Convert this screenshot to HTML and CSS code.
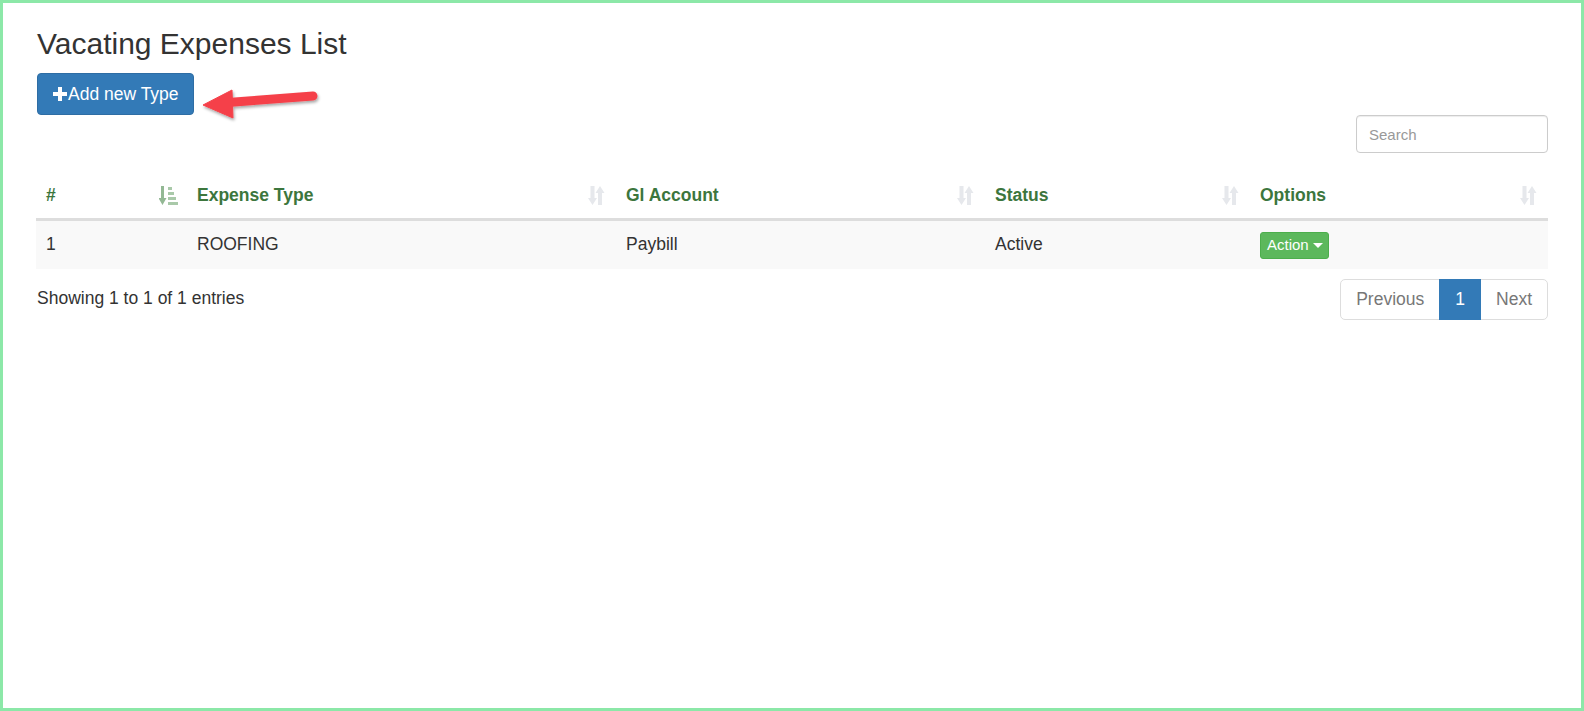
FILE: index.html
```html
<!DOCTYPE html>
<html>
<head>
<meta charset="utf-8">
<link rel="stylesheet" href="styles.css">
</head>
<body>
<div class="frame">
  <h3 class="title">Vacating Expenses List</h3>
  <button class="btn-add"><svg class="plus" viewBox="0 0 14 14" width="14" height="14"><path d="M5 0h4v5h5v4H9v5H5V9H0V5h5z" fill="#fff"/></svg>Add new Type</button>
  <div class="toolbar">
    <input class="search" type="text" placeholder="Search">
  </div>
  <table class="grid">
    <colgroup>
      <col style="width:151px"><col style="width:429px"><col style="width:369px"><col style="width:265px"><col style="width:298px">
    </colgroup>
    <thead>
      <tr>
        <th><div class="th-in"><span>#</span>
          <svg class="sort" viewBox="0 0 19 19" width="19" height="19"><path d="M2 0h3v12h2.5L3.5 19 -0.5 12H2z" fill="#93b894"/><rect x="9" y="1" width="4" height="3" fill="#a9c9a9"/><rect x="9" y="6" width="6" height="3" fill="#a9c9a9"/><rect x="9" y="11" width="8" height="3" fill="#a9c9a9"/><rect x="9" y="16" width="10" height="3" fill="#a9c9a9"/></svg></div></th>
        <th><div class="th-in"><span>Expense Type</span>
          <svg class="sort" viewBox="0 0 19 19" width="19" height="19"><path d="M2.5 0h4v12h2.5L4.5 19 0 12h2.5z M14 19h-4V7H7.5L12 0l4.5 7H14z" fill="#e6e8ec"/></svg></div></th>
        <th><div class="th-in"><span>Gl Account</span>
          <svg class="sort" viewBox="0 0 19 19" width="19" height="19"><path d="M2.5 0h4v12h2.5L4.5 19 0 12h2.5z M14 19h-4V7H7.5L12 0l4.5 7H14z" fill="#e6e8ec"/></svg></div></th>
        <th><div class="th-in"><span>Status</span>
          <svg class="sort" viewBox="0 0 19 19" width="19" height="19"><path d="M2.5 0h4v12h2.5L4.5 19 0 12h2.5z M14 19h-4V7H7.5L12 0l4.5 7H14z" fill="#e6e8ec"/></svg></div></th>
        <th><div class="th-in"><span>Options</span>
          <svg class="sort" viewBox="0 0 19 19" width="19" height="19"><path d="M2.5 0h4v12h2.5L4.5 19 0 12h2.5z M14 19h-4V7H7.5L12 0l4.5 7H14z" fill="#e6e8ec"/></svg></div></th>
      </tr>
    </thead>
    <tbody>
      <tr class="odd">
        <td>1</td>
        <td>ROOFING</td>
        <td>Paybill</td>
        <td>Active</td>
        <td><button class="btn-action">Action <span class="caret"></span></button></td>
      </tr>
    </tbody>
  </table>
  <div class="footer">
    <div class="info">Showing 1 to 1 of 1 entries</div>
    <div class="pager">
      <span class="pg disabled first">Previous</span>
      <span class="pg active">1</span>
      <span class="pg disabled last">Next</span>
    </div>
  </div>
  <svg class="arrow" width="140" height="50" viewBox="0 0 140 50">
    <defs>
      <filter id="sh" x="-20%" y="-30%" width="140%" height="180%">
        <feDropShadow dx="1" dy="2" stdDeviation="1.5" flood-color="#000" flood-opacity="0.35"/>
      </filter>
    </defs>
    <g filter="url(#sh)" fill="#f5414a" stroke="#f5414a">
      <line x1="28" y1="19.5" x2="113" y2="13" stroke-width="9" stroke-linecap="round"/>
      <polygon points="3,22 32,7 33,35" stroke-width="1" stroke-linejoin="round"/>
    </g>
  </svg>
</div>
</body>
</html>
```
FILE: styles.css
```css
* { box-sizing: border-box; }
html, body { margin: 0; padding: 0; background: #fff; }
body {
  font-family: "Liberation Sans", Arial, Helvetica, sans-serif;
  font-size: 17.5px;
  line-height: 25px;
  color: #333;
}
.frame {
  position: relative;
  width: 1584px;
  height: 711px;
  border: 3px solid #8ce8a8;
  padding: 0 33px;
}
.title {
  margin: 24px 0 13px 1px;
  font-size: 30px;
  line-height: 33px;
  font-weight: normal;
  color: #333;
}
.btn-add {
  display: inline-flex;
  align-items: center;
  height: 42px;
  margin-left: 1px;
  padding: 0 14px 0 15px;
  background: #337ab7;
  border: 1px solid #2e6da4;
  border-radius: 4px;
  color: #fff;
  font-family: inherit;
  font-size: 17.5px;
  line-height: 25px;
  cursor: pointer;
}
.plus { margin-right: 1px; margin-top: -1px; }
.toolbar {
  display: flex;
  justify-content: flex-end;
}
.search {
  width: 192px;
  height: 38px;
  border: 1px solid #ccc;
  border-radius: 4px;
  padding: 0 12px;
  font-family: inherit;
  font-size: 15px;
  color: #555;
  box-shadow: inset 0 1px 1px rgba(0,0,0,.075);
}
.search::placeholder { color: #999; }
.grid {
  margin-top: 20px;
  width: 100%;
  border-collapse: collapse;
  table-layout: fixed;
}
.grid th {
  text-align: left;
  padding: 10px 9px 10px 10px;
  font-weight: bold;
  color: #3c763d;
  border-bottom: 3px solid #ddd;
}
.th-in {
  display: flex;
  align-items: center;
  justify-content: space-between;
}
.sort { display: block; flex: none; }
.grid td {
  padding: 11px 10px 10px 10px;
  vertical-align: top;
}
.grid tr.odd td { background: #f9f9f9; }
.btn-action {
  display: inline-flex;
  align-items: center;
  height: 27px;
  margin-top: -2px;
  padding: 0 5px 0 6px;
  background: #5cb85c;
  border: 1px solid #4cae4c;
  border-radius: 3px;
  color: #fff;
  font-family: inherit;
  font-size: 15px;
  line-height: 20px;
  cursor: pointer;
}
.caret {
  display: inline-block;
  width: 0;
  height: 0;
  margin-left: 4px;
  border-top: 5px solid #fff;
  border-left: 5px solid transparent;
  border-right: 5px solid transparent;
}
.footer {
  display: flex;
  justify-content: space-between;
  align-items: flex-start;
  margin-top: 10px;
}
.info { padding-top: 7px; margin-left: 1px; }
.pager {
  display: flex;
}
.pg {
  display: block;
  height: 41px;
  padding: 7px 15px;
  border: 1px solid #ddd;
  margin-left: -1px;
  color: #777;
  background: #fff;
}
.pg.first { border-radius: 5px 0 0 5px; margin-left: 0; }
.pg.last { border-radius: 0 5px 5px 0; }
.pg.active {
  background: #337ab7;
  border-color: #337ab7;
  color: #fff;
  padding: 7px 15px;
  position: relative;
}
.arrow {
  position: absolute;
  left: 197px;
  top: 80px;
  pointer-events: none;
}
```
